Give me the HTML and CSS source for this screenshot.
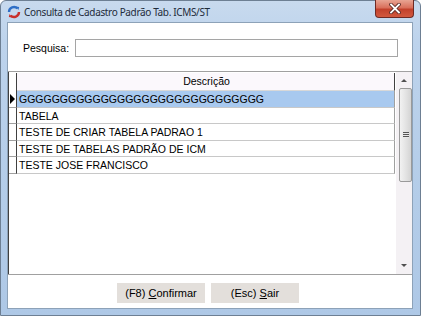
FILE: index.html
```html
<!DOCTYPE html>
<html lang="pt-BR">
<head>
    <meta charset="UTF-8">
    <title>Consulta de Cadastro Padrão Tab. ICMS/ST</title>
    <link rel="stylesheet" href="styles.css">
</head>
<body>
    <div class="janela">
        <div class="titulo">
            <svg class="icone" width="14" height="14" viewBox="0 0 14 14">
                <path d="M2 7a5 5 0 0 1 8.5-3.5" fill="none" stroke="#2f6fc6" stroke-width="2.4"/>
                <path d="M12 7a5 5 0 0 1-8.5 3.5" fill="none" stroke="#c8302c" stroke-width="2.4"/>
                <path d="M9 1.5l3.2 0.6-0.8 3z" fill="#2f6fc6"/>
                <path d="M5 12.5l-3.2-0.6 0.8-3z" fill="#c8302c"/>
            </svg>
            <span class="titulo-texto">Consulta de Cadastro Padrão Tab. ICMS/ST</span>
            <div class="fechar">
                <svg width="12" height="11" viewBox="0 0 12 11">
                    <path d="M2 1.5l8 8M10 1.5l-8 8" stroke="#5b2a26" stroke-width="3.6" stroke-linecap="square"/>
                    <path d="M2 1.5l8 8M10 1.5l-8 8" stroke="#ffffff" stroke-width="1.8" stroke-linecap="square"/>
                </svg>
            </div>
        </div>

        <div class="cliente">
            <div class="pesquisa">
                <label for="inputPesquisa">Pesquisa:</label>
                <input type="text" id="inputPesquisa">
            </div>

            <div class="grade">
                <div class="grade-corpo">
                    <div class="linha cabecalho">
                        <div class="indicador"></div>
                        <div class="celula">Descrição</div>
                    </div>
                    <div class="linha selecionada">
                        <div class="indicador"><span class="seta"></span></div>
                        <div class="celula">GGGGGGGGGGGGGGGGGGGGGGGGGGGGGG</div>
                    </div>
                    <div class="linha">
                        <div class="indicador"></div>
                        <div class="celula">TABELA</div>
                    </div>
                    <div class="linha">
                        <div class="indicador"></div>
                        <div class="celula">TESTE DE CRIAR TABELA PADRAO 1</div>
                    </div>
                    <div class="linha">
                        <div class="indicador"></div>
                        <div class="celula">TESTE DE TABELAS PADRÃO DE ICM</div>
                    </div>
                    <div class="linha">
                        <div class="indicador"></div>
                        <div class="celula">TESTE JOSE FRANCISCO</div>
                    </div>
                </div>
                <div class="rolagem">
                    <div class="seta-rolagem cima"></div>
                    <div class="trilho">
                        <div class="polegar"><span class="grip"></span></div>
                    </div>
                    <div class="seta-rolagem baixo"></div>
                </div>
            </div>

            <div class="rodape">
                <button>(F8) <u>C</u>onfirmar</button>
                <button>(Esc) <u>S</u>air</button>
            </div>
        </div>
    </div>
</body>
</html>
```

FILE: styles.css
```css
body {
    margin: 0;
    padding: 0;
    background: #ffffff;
    font-family: "Liberation Sans", Arial, sans-serif;
    font-size: 10.5px;
    color: #000;
}

.janela {
    width: 421px;
    height: 316px;
    box-sizing: border-box;
    display: flex;
    flex-direction: column;
    background: linear-gradient(to bottom, #c8daee 0px, #bdd3ec 40px, #b3cce8 200px, #aec8e6 316px);
    border: 1px solid #6d7f93;
    border-radius: 6px 6px 0 0;
}

.titulo {
    height: 21px;
    display: flex;
    align-items: center;
    position: relative;
}

.icone {
    margin-left: 6px;
    margin-top: 1px;
}

.titulo-texto {
    margin-left: 3px;
    margin-top: 1px;
    font-family: "Noto Sans", "Open Sans", sans-serif;
    font-size: 10px;
    color: #1e2b3a;
    letter-spacing: -0.35px;
}

.fechar {
    position: absolute;
    top: -1px;
    right: 6px;
    width: 39px;
    height: 18px;
    box-sizing: border-box;
    border: 1px solid #6e2a24;
    border-top: none;
    border-radius: 0 0 4px 4px;
    background: linear-gradient(to bottom, #e8a493 0%, #d9705c 45%, #c2412c 55%, #d2593f 100%);
    display: flex;
    align-items: center;
    justify-content: center;
}

.cliente {
    flex: 1;
    margin: 0 7px 6px 6px;
    background: #ffffff;
    border: 1px solid #8da2b8;
    display: flex;
    flex-direction: column;
}

.pesquisa {
    height: 48px;
    display: flex;
    align-items: flex-start;
    padding: 16px 14px 0 15px;
    box-sizing: border-box;
}

.pesquisa label {
    margin-top: 3px;
    width: 52px;
}

.pesquisa input {
    flex: 1;
    height: 18px;
    box-sizing: border-box;
    border: 1px solid #a5a5a5;
    padding: 0 3px;
    font: inherit;
}

.grade {
    height: 202px;
    border-top: 1px solid #a0a0a0;
    display: flex;
}

.grade-corpo {
    flex: 1;
    border-left: 1px solid #404040;
}

.linha {
    display: flex;
    height: 16.5px;
    box-sizing: border-box;
}

.indicador {
    width: 7px;
    border-right: 1px solid #404040;
    border-bottom: 1px solid #a0a0a0;
    position: relative;
    background: #ffffff;
}

.celula {
    flex: 1;
    padding-left: 2px;
    line-height: 16px;
    border-right: 1px solid #a0a0a0;
    border-bottom: 1px solid #c8c8c8;
    white-space: nowrap;
    overflow: hidden;
}

.cabecalho {
    height: 18px;
    margin-top: 1px;
}

.cabecalho .celula {
    text-align: center;
    background: #fbf8fc;
    border-right: 1px solid #404040;
    border-bottom: 1px solid #d8d8d8;
    line-height: 17px;
}

.cabecalho .indicador {
    border-bottom: none;
}

.selecionada .celula {
    background: #a8c9ef;
}

.seta {
    position: absolute;
    left: 1px;
    top: 3px;
    border-left: 5px solid #000;
    border-top: 5px solid transparent;
    border-bottom: 5px solid transparent;
}

.rolagem {
    width: 16px;
    margin-left: 1px;
    display: flex;
    flex-direction: column;
    background: #f4f1f4;
}

.seta-rolagem {
    height: 16px;
    position: relative;
}

.seta-rolagem::after {
    content: "";
    position: absolute;
    left: 5px;
    border-left: 3px solid transparent;
    border-right: 3px solid transparent;
}

.cima::after {
    top: 7px;
    border-bottom: 3px solid #505050;
}

.baixo::after {
    top: 6px;
    border-top: 3px solid #505050;
}

.trilho {
    flex: 1;
}

.polegar {
    height: 94px;
    margin-left: 3px;
    box-sizing: border-box;
    border: 1px solid #9a9a9a;
    border-radius: 2px;
    background: linear-gradient(to right, #f2f2f2, #e4e4e4 50%, #d4d4d4);
    display: flex;
    align-items: center;
    justify-content: center;
}

.grip {
    width: 6px;
    height: 6px;
    background: repeating-linear-gradient(to bottom, #555 0 1px, #e8e8e8 1px 2px);
}

.rodape {
    flex: 1;
    border-top: 1px solid #a0a0a0;
    display: flex;
    justify-content: center;
    align-items: flex-start;
    gap: 6px;
    padding-top: 8px;
    padding-right: 4px;
}

.rodape button {
    width: 88px;
    height: 20px;
    border: none;
    background: #e3dfdb;
    font: inherit;
    font-size: 11px;
    color: #000;
    padding: 0;
}
```
